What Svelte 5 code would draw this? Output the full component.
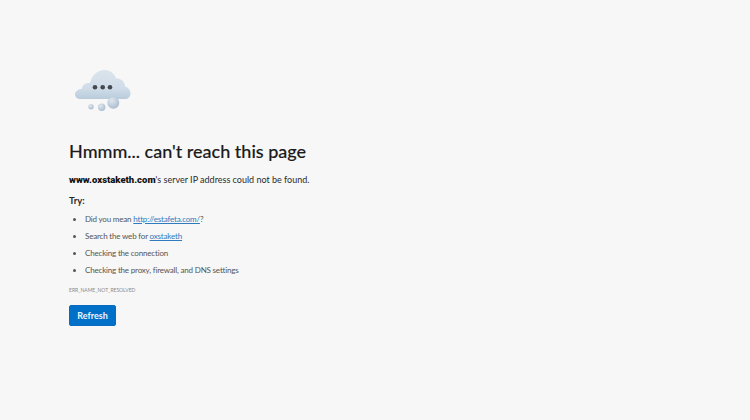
<script lang="ts">
  const host = 'www.oxstaketh.com';
</script>

<main class="page">
  <svg class="cloud" width="56" height="42" viewBox="0 0 56 42" aria-hidden="true">
    <defs>
      <linearGradient id="cloudFill" x1="0" y1="0" x2="0" y2="1">
        <stop offset="0" stop-color="#dbe4ec" />
        <stop offset="0.65" stop-color="#cfdce8" />
        <stop offset="1" stop-color="#b9cbdb" />
      </linearGradient>
      <radialGradient id="ball" cx="0.38" cy="0.32" r="0.8">
        <stop offset="0" stop-color="#dfe7ef" />
        <stop offset="1" stop-color="#a3b7ca" />
      </radialGradient>
    </defs>
    <path
      d="M6 29C2 29 0 27 0 24.500C0 21 3.500 19 7 19C7 15 10.500 12.500 15 13C17 5 23 0 29 0C35 0 39 3 41 8.500C46.500 8 50 12 50 16.500C53.500 17.500 55.500 20.500 55.500 23.500C55.500 27 53 29 50 29Z"
      fill="url(#cloudFill)"
    />
    <circle cx="20" cy="17.300" r="2.300" fill="#45494f" />
    <circle cx="27.700" cy="17.300" r="2.300" fill="#45494f" />
    <circle cx="35" cy="17.300" r="2.300" fill="#45494f" />
    <circle cx="38.300" cy="32.700" r="6" fill="url(#ball)" />
    <circle cx="26.700" cy="37.300" r="3.700" fill="url(#ball)" />
    <circle cx="16" cy="36.700" r="2.700" fill="url(#ball)" />
  </svg>

  <h1>Hmmm... can't reach this page</h1>
  <p class="summary"><strong>{host}</strong>'s server IP address could not be found.</p>
  <p class="try">Try:</p>
  <ul>
    <li>Did you mean <a href="#top">http://estafeta.com/</a>?</li>
    <li>Search the web for <a href="#top">oxstaketh</a></li>
    <li>Checking the connection</li>
    <li>Checking the proxy, firewall, and DNS settings</li>
  </ul>
  <p class="code">ERR_NAME_NOT_RESOLVED</p>
  <button type="button">Refresh</button>
</main>

<style>
  :global(body) {
    background: #f7f7f7;
  }

  .page {
    box-sizing: border-box;
    height: 420px;
    padding: 70px 0 0 69px;
    font-family: Lato, 'Noto Sans', sans-serif;
    color: #2b2b2b;
  }

  .cloud {
    display: block;
    margin-left: 6px;
  }

  h1 {
    margin: 24px 0 0;
    font-size: 18px;
    line-height: 30px;
    font-weight: 500;
    color: #1b1b1b;
    -webkit-text-stroke: 0.15px #1b1b1b;
  }

  .summary {
    margin: 7px 0 0;
    font-size: 9px;
    line-height: 14px;
  }

  .summary strong {
    font-family: Roboto, sans-serif;
    font-size: 9.500px;
    font-weight: 900;
    color: #111;
  }

  .try {
    margin: 7px 0 0;
    font-size: 9.500px;
    line-height: 14px;
    font-weight: 700;
  }

  ul {
    margin: 4.500px 0 0;
    padding: 0 0 0 16px;
    font-size: 8px;
    letter-spacing: -0.18px;
    line-height: 13px;
    color: #555;
  }

  li {
    margin-bottom: 4.300px;
  }

  a {
    color: #2f7bbd;
    text-decoration: underline;
    text-underline-offset: 1px;
  }

  .code {
    margin: 9px 0 0;
    font-size: 5px;
    line-height: 8px;
    color: #8a8a8a;
  }

  button {
    display: block;
    margin-top: 11px;
    width: 47px;
    height: 21px;
    padding: 0;
    border: 1px solid #0a6cc0;
    border-radius: 2px;
    background: #0070c9;
    color: #eef6fc;
    font: 700 9px Lato, 'Noto Sans', sans-serif;
  }
</style>
